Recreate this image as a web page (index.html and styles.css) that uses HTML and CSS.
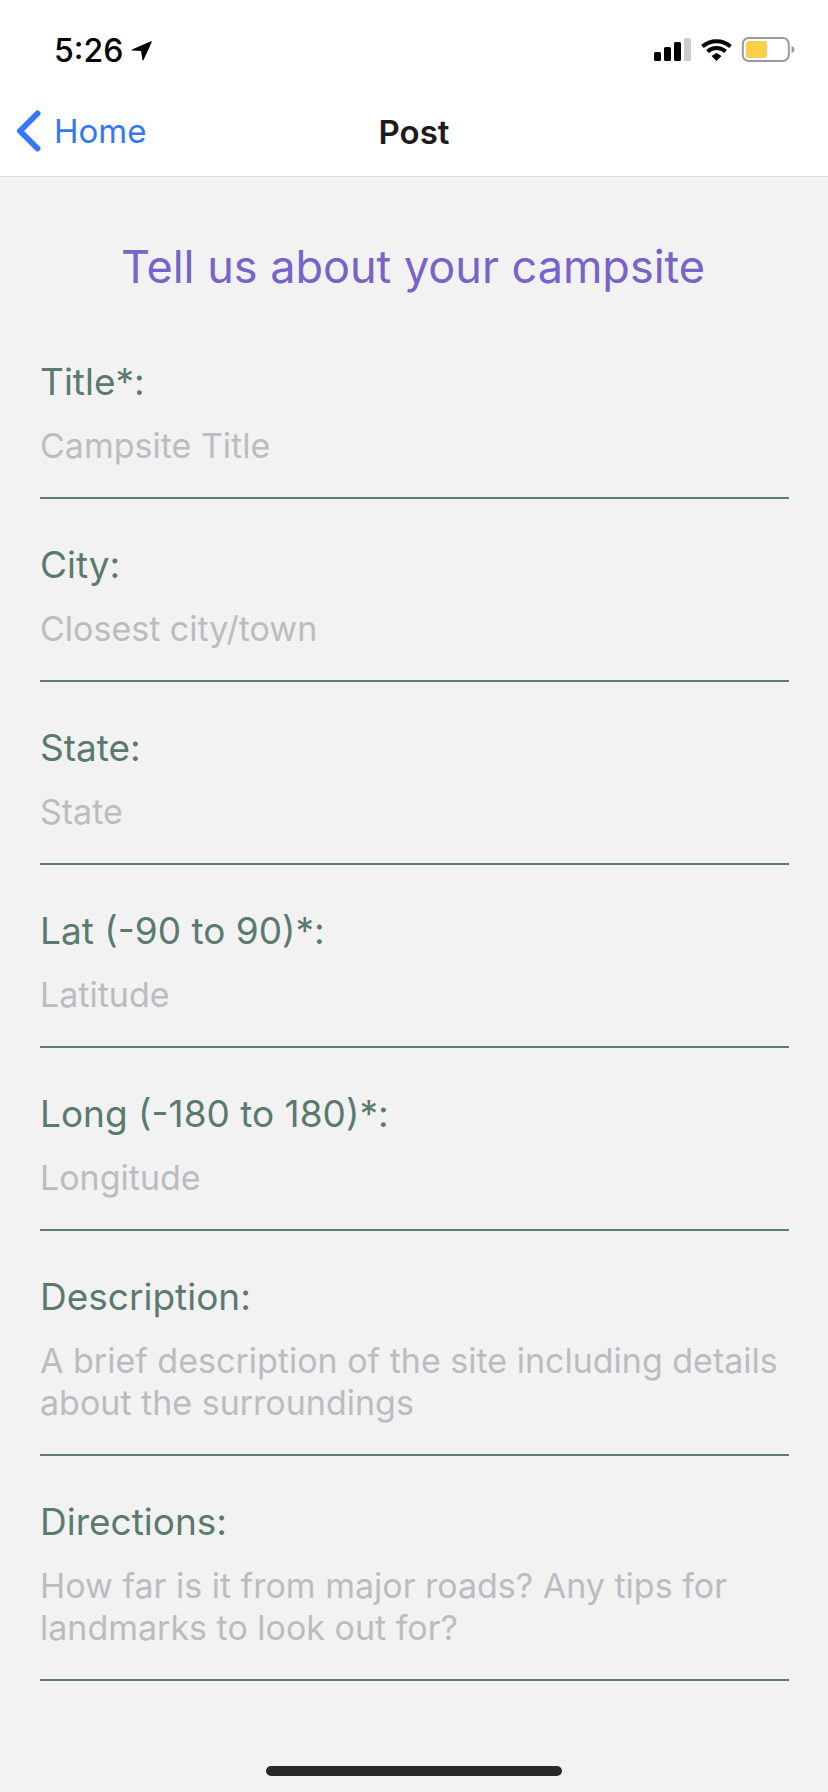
FILE: index.html
```html
<!DOCTYPE html>
<html lang="en">
<head>
  <meta charset="UTF-8" />
  <meta name="viewport" content="width=device-width, initial-scale=1.0" />
  <title>Post</title>
  <link rel="stylesheet" href="styles.css">
</head>
<body>
  <div class="screen">
    <div class="status-bar">
      <div class="clock">
        <span class="time">5:26</span>
        <svg class="arrow" width="22" height="21" viewBox="0 0 22 21"><path d="M1 9.500 20 1.200c.6-.2 1 .2.8.8L12.600 20c-.3.6-1 .5-1.100-.1L10 11 1.200 10.600c-.7 0-.8-.8-.2-1.100z" fill="#000"/></svg>
      </div>
      <svg class="status-icons" width="144" height="26" viewBox="0 0 144 26">
        <rect x="0" y="15" width="7" height="9" rx="1.500" fill="#000"/>
        <rect x="10" y="10" width="7" height="14" rx="1.500" fill="#000"/>
        <rect x="20" y="5" width="7" height="19" rx="1.500" fill="#000"/>
        <rect x="30" y="1" width="7" height="23" rx="1.500" fill="#ccc"/>
        <path d="M48.500 9.500a21 21 0 0 1 28 0" fill="none" stroke="#000" stroke-width="4"/>
        <path d="M53.500 14.500a13.500 13.500 0 0 1 18 0" fill="none" stroke="#000" stroke-width="4"/>
        <path d="M57.500 19 62.500 16 67.500 19 62.500 24z" fill="#000"/>
        <rect x="88.800" y="1" width="46" height="23" rx="6" fill="none" stroke="#999" stroke-width="2"/>
        <rect x="92" y="4" width="21" height="17" rx="3" fill="#f8cf48"/>
        <path d="M137.500 9c2 .5 3 2 3 3.500s-1 3-3 3.500z" fill="#999"/>
      </svg>
    </div>

    <div class="nav-bar">
      <div class="back">
        <svg class="chevron" width="26" height="42" viewBox="0 0 26 42"><path d="M22.500 3.500 5 21 22.500 38.500" fill="none" stroke="#3478f6" stroke-width="6" stroke-linecap="round" stroke-linejoin="round"/></svg>
        <span>Home</span>
      </div>
      <div class="nav-title">Post</div>
    </div>

    <div class="content">
      <h2 class="heading">Tell us about your campsite</h2>
      <div class="field">
        <div class="label">Title*:</div>
        <div class="placeholder">Campsite Title</div>
      </div>
      <div class="field">
        <div class="label">City:</div>
        <div class="placeholder">Closest city/town</div>
      </div>
      <div class="field">
        <div class="label">State:</div>
        <div class="placeholder">State</div>
      </div>
      <div class="field">
        <div class="label">Lat (-90 to 90)*:</div>
        <div class="placeholder">Latitude</div>
      </div>
      <div class="field">
        <div class="label">Long (-180 to 180)*:</div>
        <div class="placeholder">Longitude</div>
      </div>
      <div class="field">
        <div class="label">Description:</div>
        <div class="placeholder">A brief description of the site including details about the surroundings</div>
      </div>
      <div class="field">
        <div class="label">Directions:</div>
        <div class="placeholder">How far is it from major roads? Any tips for landmarks to look out for?</div>
      </div>
    </div>

    <div class="home-bar"></div>
  </div>
</body>
</html>
```

FILE: styles.css
```css
* {
  box-sizing: border-box;
}
body {
  margin: 0;
  padding: 0;
  font-family: Inter, 'Liberation Sans', sans-serif;
  background: #f2f2f2;
}
.screen {
  width: 828px;
  height: 1792px;
  display: flex;
  flex-direction: column;
  overflow: hidden;
}
.status-bar {
  height: 88px;
  padding: 30px 30px 0 54px;
  background: #fff;
  display: flex;
  justify-content: space-between;
  align-items: flex-start;
}
.clock {
  display: flex;
  align-items: center;
  gap: 8px;
  height: 40px;
}
.time {
  font-size: 32px;
  font-weight: 500;
  color: #000;
}
.arrow {
  margin-top: 1px;
}
.status-icons {
  margin-top: 7px;
}
.nav-bar {
  height: 89px;
  background: #fff;
  border-bottom: 1px solid #dcdcdc;
  display: flex;
  align-items: center;
  justify-content: center;
  position: relative;
}
.back {
  position: absolute;
  left: 15px;
  top: 22px;
  display: flex;
  align-items: center;
  gap: 13px;
  font-size: 33px;
  color: #3478f6;
}
.nav-title {
  font-size: 33px;
  font-weight: 600;
  color: #1c1c1e;
}
.content {
  flex: 1;
  padding: 0 39px 0 40px;
}
.heading {
  margin: 0;
  height: 139px;
  padding: 62px 3px 0 0;
  font-size: 45px;
  line-height: 56px;
  font-weight: 400;
  text-align: center;
  color: #7763c9;
}
.field {
  padding: 43px 0 30px;
  border-bottom: 2px solid #5b7b72;
}
.label {
  font-size: 37px;
  line-height: 46px;
  color: #5a7a6f;
  margin-bottom: 20px;
}
.placeholder {
  font-size: 34px;
  line-height: 42px;
  color: #bcbcc0;
}
.home-bar {
  width: 296px;
  height: 10px;
  margin: 0 auto 16px;
  border-radius: 5px;
  background: #282828;
}
```
